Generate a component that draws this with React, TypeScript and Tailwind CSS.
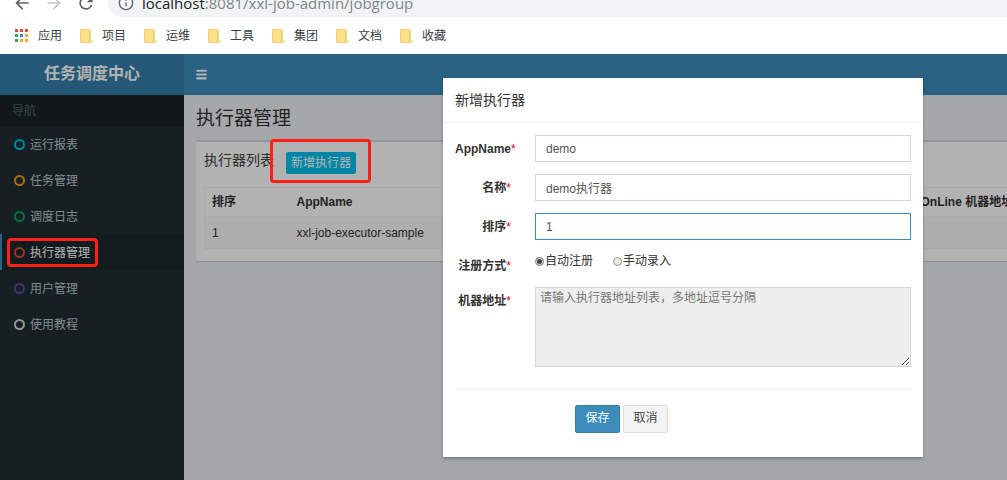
import { type ReactNode } from "react";
import { Info, Menu } from "lucide-react";
import { MdArrowBack, MdArrowForward, MdRefresh } from "react-icons/md";

const bookmarks = ["项目", "运维", "工具", "集团", "文档", "收藏"];

const menu = [
  { label: "运行报表", ring: "border-[#00c0ef]" },
  { label: "任务管理", ring: "border-[#f39c12]" },
  { label: "调度日志", ring: "border-[#00a65a]" },
  { label: "执行器管理", ring: "border-[#dd4b39]", active: true },
  { label: "用户管理", ring: "border-[#555299]" },
  { label: "使用教程", ring: "border-[#d2d6de]" },
];

const appDots = [
  "bg-[#e8453c]", "bg-[#e8453c]", "bg-[#e8453c]",
  "bg-[#2da94f]", "bg-[#3f7de8]", "bg-[#f0a92e]",
  "bg-[#2da94f]", "bg-[#f0a92e]", "bg-[#f0a92e]",
];

function FolderIcon() {
  return (
    <svg width="12" height="14" viewBox="0 0 12 14" aria-hidden="true">
      <path d="M0.5 0.5h9.5v9l1.5 1.5v2.5H0.5z" fill="#fde28c" stroke="#f3d277" />
      <path d="M10 1v8.5L8.5 13" fill="none" stroke="#e8c35c" />
    </svg>
  );
}

function BrowserBar() {
  return (
    <div className="bg-white">
      <div className="flex h-[17px] items-end overflow-hidden pl-3">
        <div className="flex h-7 flex-none items-center gap-3 text-[#5f6368]">
          <MdArrowBack size={20} />
          <MdArrowForward size={20} className="text-[#c4c6c9]" />
          <MdRefresh size={20} />
        </div>
        <div className="ml-3 flex h-7 flex-1 items-center gap-2 rounded-l-full bg-[#f1f3f4] pl-2.5 font-['Open_Sans','Noto_Sans',sans-serif] text-[15px] leading-5 text-[#80868b]">
          <Info size={16} className="text-[#5f6368]" />
          <span>
            <span className="text-[#202124]">localhost</span>:8081/xxl-job-admin/jobgroup
          </span>
        </div>
      </div>
      <nav className="flex h-[37px] items-center gap-[18px] pl-[15px] text-xs text-[#3c4043]">
        <a href="#apps" className="flex items-center gap-2.5">
          <span className="grid grid-cols-3 gap-0.5">
            {appDots.map((color, i) => (
              <span key={i} className={`size-[3px] ${color}`} />
            ))}
          </span>
          应用
        </a>
        {bookmarks.map((name) => (
          <a key={name} href="#bookmark" className="flex items-center gap-2.5">
            <FolderIcon />
            {name}
          </a>
        ))}
      </nav>
    </div>
  );
}

function Sidebar() {
  return (
    <aside className="w-[184px] flex-none bg-[#222d32] text-xs">
      <p className="h-[31px] bg-[#1a2226] px-3 leading-8 text-[#4b646f]">导航</p>
      <ul>
        {menu.map((item) => (
          <li key={item.label}>
            <a
              href="#menu"
              className={`relative flex h-9 items-center gap-[5px] border-l-2 pl-3 ${
                item.active ? "border-[#3c8dbc] bg-[#1e282c] text-white" : "border-transparent text-[#b8c7ce]"
              }`}
            >
              <span className={`size-[11px] rounded-full border-2 ${item.ring}`} />
              <span className="pt-px">{item.label}</span>
              {item.active && (
                <span className="absolute top-1 left-[5px] z-20 h-[29px] w-[91px] rounded-sm border-[3px] border-[#fe1f17]" />
              )}
            </a>
          </li>
        ))}
      </ul>
    </aside>
  );
}

function GroupTable() {
  return (
    <table className="w-[1142px] table-fixed border border-[#f4f4f4] text-left text-xs text-[#333]">
      <thead>
        <tr className="h-[29px] border-b border-[#f4f4f4]">
          <th className="w-[85px] px-[7px]">排序</th>
          <th className="w-[312px] px-[7px]">AppName</th>
          <th className="w-[312px] px-[7px]">名称</th>
          <th className="px-[7px]">OnLine 机器地址</th>
        </tr>
      </thead>
      <tbody>
        <tr className="h-8 bg-[#f9f9f9]">
          <td className="px-[7px]">1</td>
          <td className="px-[7px]">xxl-job-executor-sample</td>
          <td className="px-[7px]">示例执行器</td>
          <td />
        </tr>
      </tbody>
    </table>
  );
}

function Field({ id, label, children }: { id: string; label: string; children: ReactNode }) {
  return (
    <div className="flex gap-6">
      <label htmlFor={id} className="w-14 flex-none pt-[5px] text-right leading-[18px] font-bold whitespace-nowrap">
        {label}
        <span className="font-normal text-red-600">*</span>
      </label>
      {children}
    </div>
  );
}

const inputClass =
  "h-[27px] min-w-0 flex-1 border border-[#d2d6de] px-2.5 text-[#555] outline-none focus:border-[#3c8dbc]";
const radioClass =
  "size-[9px] appearance-none rounded-full border border-[#999] bg-[#e8e8e8] checked:bg-[#444] checked:shadow-[inset_0_0_0_1px_#ddd]";

function AddGroupModal() {
  return (
    <div
      role="dialog"
      aria-label="新增执行器"
      className="absolute top-6 left-[443px] z-30 w-[480px] bg-white text-xs text-[#333] shadow-[0_2px_3px_rgba(0,0,0,0.25)]"
    >
      <h4 className="border-b border-[#f4f4f4] px-3 pt-3 pb-3 text-sm leading-5">新增执行器</h4>
      <form className="px-3 pt-3 pb-6">
        <div className="flex flex-col gap-3">
          <Field id="appname" label="AppName">
            <input id="appname" defaultValue="demo" className={inputClass} />
          </Field>
          <Field id="title" label="名称">
            <input id="title" defaultValue="demo执行器" className={inputClass} />
          </Field>
          <Field id="order" label="排序">
            <input id="order" defaultValue="1" autoFocus className={inputClass} />
          </Field>
          <Field id="auto" label="注册方式">
            <div className="flex h-[23px] gap-5 leading-[18px]">
              <label className="flex h-[18px] items-center gap-px">
                <input id="auto" type="radio" name="addressType" defaultChecked className={radioClass} />
                自动注册
              </label>
              <label className="flex h-[18px] items-center gap-px">
                <input type="radio" name="addressType" className={radioClass} />
                手动录入
              </label>
            </div>
          </Field>
          <Field id="addresses" label="机器地址">
            <textarea
              id="addresses"
              readOnly
              placeholder="请输入执行器地址列表，多地址逗号分隔"
              className="h-20 min-w-0 flex-1 resize border border-[#d2d6de] bg-[#eee] px-1 py-0.5 leading-4 placeholder:text-[#777]"
            />
          </Field>
        </div>
        <hr className="mt-[21px] mb-4 border-[#eee]" />
        <div className="flex gap-[3px] pl-[120px]">
          <button type="button" className="h-7 w-[45px] rounded-xs border border-[#367fa9] bg-[#3c8dbc] pb-0.5 text-white">
            保存
          </button>
          <button type="button" className="h-7 w-[45px] rounded-xs border border-[#ddd] bg-[#f4f4f4] pb-0.5 text-[#444]">
            取消
          </button>
        </div>
      </form>
    </div>
  );
}

export default function App() {
  return (
    <div className="flex min-h-screen flex-col overflow-hidden font-['Liberation_Sans','Noto_Sans_CJK_SC',sans-serif]">
      <BrowserBar />
      <div className="relative flex flex-1 flex-col">
        <header className="flex h-[41px] bg-[#3c8dbc] text-white">
          <a href="#home" className="w-[184px] bg-[#367fa9] text-center text-base leading-10 font-bold">
            任务调度中心
          </a>
          <button type="button" aria-label="Toggle navigation" className="px-[11px]">
            <Menu size={13} strokeWidth={4} />
          </button>
        </header>

        <div className="flex flex-1">
          <Sidebar />
          <main className="min-w-0 flex-1 overflow-hidden bg-[#ecf0f5] pl-3">
            <h1 className="pt-3 pb-[9px] text-[19px] leading-6 text-[#333]">执行器管理</h1>
            <section className="rounded-l-xs border-t-2 border-[#d2d6de] bg-white px-2 pb-3 shadow-[0_1px_1px_rgba(0,0,0,0.15)]">
              <div className="flex h-[45px] gap-3 pt-2">
                <h3 className="text-sm leading-5 text-[#444]">执行器列表</h3>
                <span className="relative">
                  <button type="button" className="h-[22px] rounded-xs bg-[#00c0ef] px-[5px] text-xs text-white">
                    新增执行器
                  </button>
                  <span className="absolute -top-[11px] -left-4 z-20 h-11 w-[101px] rounded-sm border-[3px] border-[#fe1f17]" />
                </span>
              </div>
              <GroupTable />
            </section>
          </main>
        </div>

        <div className="absolute inset-0 z-10 bg-black/30" />
        <AddGroupModal />
      </div>
    </div>
  );
}
